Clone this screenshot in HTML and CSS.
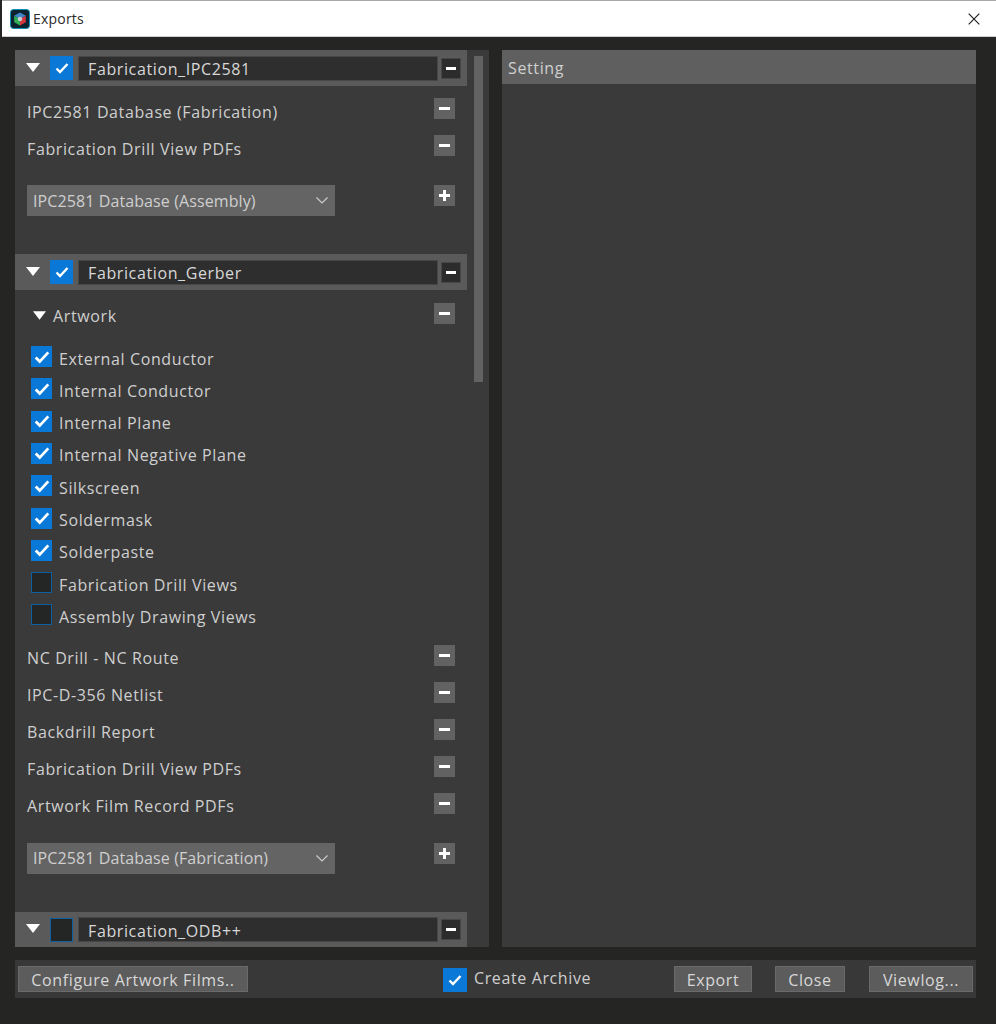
FILE: index.html
```html
<!DOCTYPE html>
<html lang="en">
<head>
<meta charset="utf-8">
<title>Exports</title>
<link rel="stylesheet" href="styles.css">
</head>
<body>
<svg class="defs" width="0" height="0" aria-hidden="true">
  <symbol id="tick" viewBox="0 0 14 12"><path d="M1.5 6.5 5 10 12.5 2" fill="none" stroke="#fff" stroke-width="2.4"/></symbol>
  <symbol id="tri" viewBox="0 0 14 9"><path d="M0 0H14L7 9Z" fill="#fff"/></symbol>
  <symbol id="chev" viewBox="0 0 12 7"><path d="M.5 .5 6 6 11.500 .5" fill="none" stroke="#d0d0d0" stroke-width="1.100"/></symbol>
</svg>
<header class="titlebar">
  <svg class="logo" viewBox="0 0 20 20" width="20" height="20">
    <rect x=".5" y=".5" width="19" height="19" rx="3" fill="#0c2430" stroke="#0d8fb8"/>
    <path d="M10 3.500 15.800 6.800 10 10 4.200 6.800Z" fill="#3f86c9"/>
    <path d="M4.200 6.800 10 10V16.500L4.200 13.200Z" fill="#2fae55"/>
    <path d="M15.800 6.800 10 10V16.500L15.800 13.200Z" fill="#d2363f"/>
    <circle cx="10" cy="10" r="2.300" fill="#c9ced2"/>
  </svg>
  <span class="title">Exports</span>
  <svg class="close" viewBox="0 0 12 12" width="12" height="12"><path d="M.7 .7 11.300 11.300M11.300 .7 .7 11.300" stroke="#222" stroke-width="1.200"/></svg>
</header>
<main class="content">
  <div class="left">
    <div class="scroll-content">
      <section class="group g1">
        <div class="ghead">
          <svg class="tri"><use href="#tri"/></svg>
          <span class="cb big on"><svg class="tick"><use href="#tick"/></svg></span>
          <div class="name">Fabrication_IPC2581</div>
          <span class="sq dark minus"></span>
        </div>
        <div class="row r1"><span>IPC2581 Database (Fabrication)</span><span class="sq minus"></span></div>
        <div class="row"><span>Fabrication Drill View PDFs</span><span class="sq minus"></span></div>
        <div class="addrow"><div class="select"><span>IPC2581 Database (Assembly)</span><svg class="chev"><use href="#chev"/></svg></div><span class="sq plus"></span></div>
      </section>
      <section class="group g2">
        <div class="ghead">
          <svg class="tri"><use href="#tri"/></svg>
          <span class="cb big on"><svg class="tick"><use href="#tick"/></svg></span>
          <div class="name">Fabrication_Gerber</div>
          <span class="sq dark minus"></span>
        </div>
        <div class="row artwork"><span class="art"><svg class="tri small"><use href="#tri"/></svg>Artwork</span><span class="sq minus"></span></div>
        <ul class="checks">
          <li><span class="cb on"><svg class="tick"><use href="#tick"/></svg></span>External Conductor</li>
          <li><span class="cb on"><svg class="tick"><use href="#tick"/></svg></span>Internal Conductor</li>
          <li><span class="cb on"><svg class="tick"><use href="#tick"/></svg></span>Internal Plane</li>
          <li><span class="cb on"><svg class="tick"><use href="#tick"/></svg></span>Internal Negative Plane</li>
          <li><span class="cb on"><svg class="tick"><use href="#tick"/></svg></span>Silkscreen</li>
          <li><span class="cb on"><svg class="tick"><use href="#tick"/></svg></span>Soldermask</li>
          <li><span class="cb on"><svg class="tick"><use href="#tick"/></svg></span>Solderpaste</li>
          <li><span class="cb"></span>Fabrication Drill Views</li>
          <li><span class="cb"></span>Assembly Drawing Views</li>
        </ul>
        <div class="row"><span>NC Drill - NC Route</span><span class="sq minus"></span></div>
        <div class="row"><span>IPC-D-356 Netlist</span><span class="sq minus"></span></div>
        <div class="row"><span>Backdrill Report</span><span class="sq minus"></span></div>
        <div class="row"><span>Fabrication Drill View PDFs</span><span class="sq minus"></span></div>
        <div class="row"><span>Artwork Film Record PDFs</span><span class="sq minus"></span></div>
        <div class="addrow"><div class="select"><span>IPC2581 Database (Fabrication)</span><svg class="chev"><use href="#chev"/></svg></div><span class="sq plus"></span></div>
      </section>
      <section class="group">
        <div class="ghead last">
          <svg class="tri"><use href="#tri"/></svg>
          <span class="cb big"></span>
          <div class="name">Fabrication_ODB++</div>
          <span class="sq dark minus"></span>
        </div>
      </section>
    </div>
    <div class="scrollbar"><div class="thumb"></div></div>
  </div>
  <div class="right">
    <div class="rhead">Setting</div>
  </div>
</main>
<footer class="bottom">
  <button class="btn cfg">Configure Artwork Films..</button>
  <label class="archive"><span class="cb big on"><svg class="tick"><use href="#tick"/></svg></span>Create Archive</label>
  <button class="btn export">Export</button>
  <button class="btn closeb">Close</button>
  <button class="btn viewlog">Viewlog...</button>
</footer>
</body>
</html>
```
FILE: styles.css
```css
* { box-sizing: border-box; }
html, body { margin: 0; padding: 0; }
body {
  width: 996px;
  height: 1024px;
  overflow: hidden;
  background: #252624;
  color: #cfcfcf;
  font-family: "Open Sans", "Noto Sans", sans-serif;
  font-size: 16px;
  letter-spacing: .62px;
}
.defs { position: absolute; }
.titlebar {
  height: 37px;
  margin-left: 2px;
  background: #fff;
  border-top: 1px solid #a9a9a9;
  border-bottom: 1px solid #cfcfcf;
  display: flex;
  align-items: center;
  padding: 0 16px 0 8px;
  color: #2a2a2a;
  font-size: 14px;
  letter-spacing: .2px;
}
.logo { flex: none; }
.title { margin-left: 3px; flex: 1; }
.close { flex: none; }
.content {
  display: flex;
  gap: 13px;
  padding: 13px 20px 0 15px;
  height: 910px;
}
.left {
  width: 474px;
  height: 897px;
  background: #3a3a3a;
  display: flex;
  overflow: hidden;
}
.scroll-content { width: 452px; flex: none; }
.scrollbar { flex: 1; padding: 6px 0 0 7px; }
.thumb { width: 9px; height: 326px; background: #626262; }
.group { display: block; }
.g1 { height: 204px; }
.ghead {
  height: 36px;
  background: #5a5a5a;
  display: flex;
  align-items: center;
  padding: 0 6px 0 11px;
}
.ghead.last { height: 35px; }
.ghead.last .name { line-height: 27px; }
.tri { width: 14px; height: 9px; flex: none; margin-right: 10px; margin-top: -2px; }
.tri.small { width: 13px; height: 9px; margin: 0 7px 0 0; }
.cb {
  width: 21px;
  height: 21px;
  flex: none;
  background: #242625;
  border: 1px solid #0d5f9f;
  display: inline-flex;
  align-items: center;
  justify-content: center;
}
.cb.on { background: #0a78d7; border-color: #0a78d7; }
.cb.big { width: 23px; height: 24px; }
.tick { width: 14px; height: 12px; }
.checks .tick { width: 16px; height: 14px; }
.name {
  width: 360px;
  height: 25px;
  margin-left: 5px;
  margin-right: 3px;
  flex: none;
  background: #2e2e2e;
  border: 1px solid #474747;
  padding-left: 9px;
  line-height: 25px;
  color: #d8d8d8;
}
.sq {
  width: 21px;
  height: 21px;
  flex: none;
  background: #626262;
  position: relative;
  display: block;
}
.sq.dark { width: 20px; background: #2c2c2c; border: 1px solid #474747; }
.minus::after, .plus::after, .plus::before {
  content: "";
  position: absolute;
  background: #fff;
}
.minus::after { left: 5px; right: 5px; top: 9px; height: 3px; }
.sq.dark.minus::after { left: 4px; right: 4px; top: 8px; }
.plus::after { left: 5px; right: 5px; top: 9px; height: 3px; }
.plus::before { left: 9px; top: 5px; width: 3px; bottom: 5px; }
.row {
  height: 37px;
  display: flex;
  align-items: center;
  justify-content: space-between;
  padding: 0 12px;
}
.row .sq { margin-bottom: 6px; }
.row.r1 { margin-top: 7px; }
.artwork { margin-top: 8px; height: 35px; }
.row.artwork .sq { margin-bottom: 4px; }
.art { display: flex; align-items: center; }
.art .tri.small { margin-left: 6px; }
.addrow {
  display: flex;
  justify-content: space-between;
  align-items: flex-start;
  padding: 0 12px;
  margin-top: 18px;
}
.select {
  width: 308px;
  height: 31px;
  background: #646464;
  display: flex;
  align-items: center;
  justify-content: space-between;
  padding: 0 7px 0 6px;
  letter-spacing: .1px;
}
.chev { width: 12px; height: 7px; }
.checks { list-style: none; margin: 9.400px 0 0; padding: 0 0 0 16px; }
.checks li { height: 32.300px; display: flex; align-items: center; gap: 7px; }
.checks .cb { position: relative; top: -2px; }
.checks + .row { margin-top: 6.600px; }
.g2 { height: 658px; }
.right { width: 474px; height: 897px; background: #3a3a3a; }
.rhead {
  height: 34px;
  background: #5f5f5f;
  padding-left: 6px;
  line-height: 36px;
}
.bottom {
  margin: 13px 20px 0 15px;
  height: 38px;
  background: #383838;
  display: flex;
  align-items: center;
  padding: 0 3px;
}
.btn {
  height: 26px;
  border: 1px solid #6a6a6a;
  background: #5c5c5c;
  color: #d8d8d8;
  font: inherit;
  letter-spacing: inherit;
  padding: 1px 0 0;
}
.cfg { width: 230px; }
.archive { display: flex; align-items: center; gap: 7px; margin-left: 195px; width: 231px; position: relative; top: -1px; }
.archive .cb { position: relative; top: 2px; width: 24px; }
.export { width: 78px; }
.closeb { width: 70px; margin-left: 23px; }
.viewlog { width: 104px; margin-left: 24px; }
```
